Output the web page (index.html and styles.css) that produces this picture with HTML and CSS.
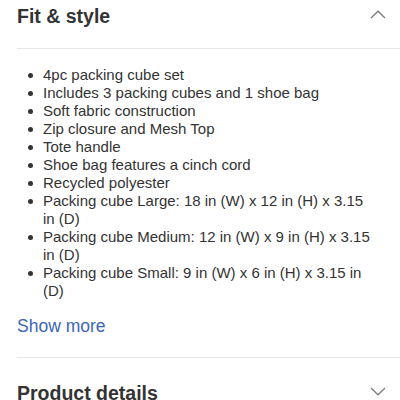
FILE: index.html
```html
<!DOCTYPE html>
<html>
<head>
<meta charset="utf-8">
<link rel="stylesheet" href="styles.css">
</head>
<body>
<section class="section">
  <div class="header first">
    <h2 class="title">Fit &amp; style</h2>
    <svg class="chev" width="16" height="9" viewBox="0 0 16 9"><polyline points="1,8 8,1.2 15,8" fill="none" stroke="#7a7a7a" stroke-width="1.2"/></svg>
  </div>
  <div class="body">
    <ul class="list">
      <li>4pc packing cube set</li>
      <li>Includes 3 packing cubes and 1 shoe bag</li>
      <li>Soft fabric construction</li>
      <li>Zip closure and Mesh Top</li>
      <li>Tote handle</li>
      <li>Shoe bag features a cinch cord</li>
      <li>Recycled polyester</li>
      <li>Packing cube Large: 18 in (W) x 12 in (H) x 3.15 in (D)</li>
      <li>Packing cube Medium: 12 in (W) x 9 in (H) x 3.15 in (D)</li>
      <li>Packing cube Small: 9 in (W) x 6 in (H) x 3.15 in (D)</li>
    </ul>
    <a class="more" href="#">Show more</a>
  </div>
</section>
<section class="section">
  <div class="header second">
    <h2 class="title">Product details</h2>
    <svg class="chev" width="16" height="9" viewBox="0 0 16 9"><polyline points="1,1 8,7.8 15,1" fill="none" stroke="#7a7a7a" stroke-width="1.2"/></svg>
  </div>
</section>
</body>
</html>
```
FILE: styles.css
```css
html, body {
  margin: 0;
  padding: 0;
  background: #fff;
}
body {
  font-family: "Liberation Sans", Arial, sans-serif;
  color: #333;
  padding-left: 17px;
  overflow: hidden;
  height: 400px;
}
.section {
  display: flex;
  flex-direction: column;
}
.header {
  display: flex;
  justify-content: space-between;
  align-items: flex-start;
  padding-right: 14px;
}
.header.first {
  height: 47px;
  padding-top: 4px;
  box-sizing: border-box;
  border-bottom: 1px solid #e6e6e6;
  height: 49px;
}
.header.second {
  padding-top: 23px;
}
.title {
  margin: 0;
  font-size: 19.5px;
  line-height: 24px;
  font-weight: bold;
  color: #333;
}
.first .chev {
  margin-top: 6px;
}
.second .chev {
  margin-top: 6px;
}
.body {
  display: flex;
  flex-direction: column;
  align-items: flex-start;
  padding-top: 17px;
  padding-bottom: 20px;
  border-bottom: 1px solid #e6e6e6;
}
.list {
  list-style: none;
  margin: 0;
  padding: 0;
  width: 354px;
  font-size: 15px;
  line-height: 18px;
}
.list li {
  display: grid;
  grid-template-columns: 26px 1fr;
}
.list li::before {
  content: "";
  width: 5px;
  height: 5px;
  border-radius: 50%;
  background: #333;
  margin-left: 10.5px;
  margin-top: 7px;
}
.more {
  margin-top: 15px;
  font-size: 17.5px;
  line-height: 22px;
  color: #3b66b6;
  text-decoration: none;
}
```
